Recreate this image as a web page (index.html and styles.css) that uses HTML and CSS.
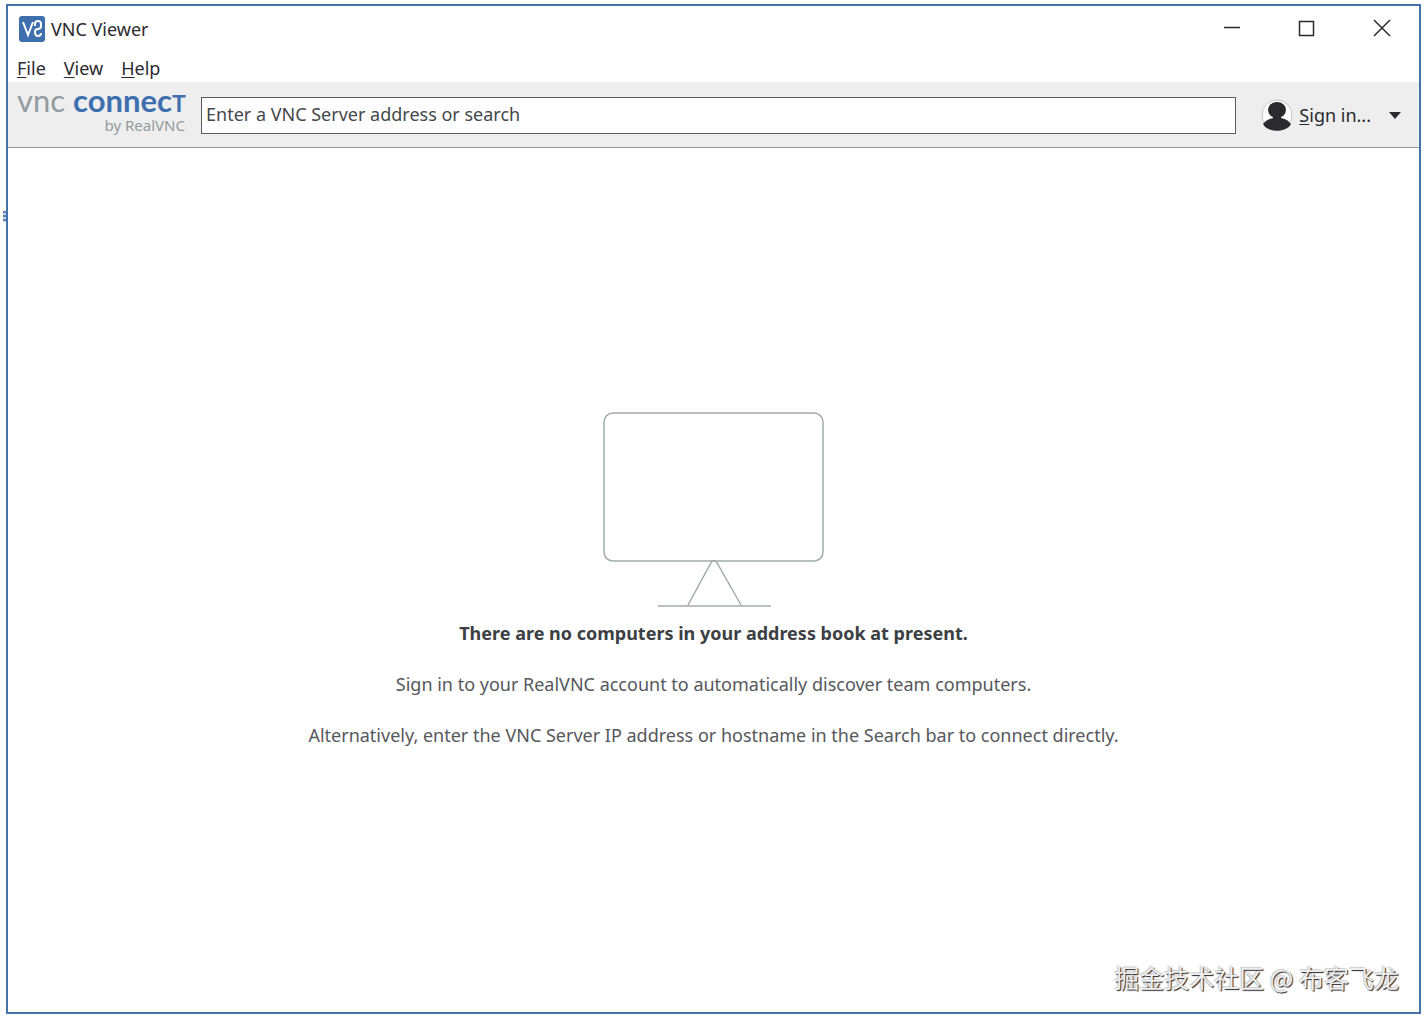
FILE: index.html
```html
<!DOCTYPE html>
<html lang="en">
<head>
    <meta charset="UTF-8">
    <meta name="viewport" content="width=device-width, initial-scale=1.0">
    <title>VNC Viewer</title>
    <link rel="stylesheet" href="styles.css">
</head>
<body>

    <div class="edge-mark"></div>

    <div class="window">
        <header class="titlebar">
            <svg class="app-icon" viewBox="0 0 26 26" aria-hidden="true">
                <rect width="26" height="26" rx="3"/>
                <path d="M4 6L9 19L14 6"/>
                <path d="M16 10V8Q16 5 19 5Q22 5 22 8V10Q22 13 19 13Q16 13 16 16Q16 20 19 20Q22 20 22 17"/>
            </svg>
            <h1>VNC Viewer</h1>
            <div class="window-buttons">
                <button aria-label="Minimize">
                    <svg viewBox="0 0 18 18"><path d="M1 8.5H17"/></svg>
                </button>
                <button aria-label="Maximize">
                    <svg viewBox="0 0 18 18"><rect x="1.5" y="2.5" width="14" height="14"/></svg>
                </button>
                <button aria-label="Close">
                    <svg viewBox="0 0 18 18"><path d="M1 1L17 17M17 1L1 17"/></svg>
                </button>
            </div>
        </header>

        <nav class="menubar">
            <button><u>F</u>ile</button>
            <button><u>V</u>iew</button>
            <button><u>H</u>elp</button>
        </nav>

        <div class="toolbar">
            <div class="brand">
                <div class="brand-name">vnc <b>connec<span>T</span></b></div>
                <div class="brand-by">by RealVNC</div>
            </div>
            <input class="search" type="text" aria-label="Address or search" placeholder="Enter a VNC Server address or search">
            <button class="sign-in">
                <svg class="avatar" viewBox="0 0 32 32" aria-hidden="true">
                    <circle cx="16" cy="16" r="15" fill="#fff" stroke="#c4c4c4"/>
                    <path d="M2 25C5 21 9 20 12 19C14 20 18 20 20 19C24 20 27 21 30 25C26 34 6 34 2 25Z"/>
                    <ellipse cx="16" cy="11" rx="9" ry="8"/>
                    <path d="M12 17H20V21H12Z"/>
                </svg>
                <span><u>S</u>ign in...</span>
                <svg class="caret" viewBox="0 0 12 7" aria-hidden="true"><path d="M0 0H12L6 7Z"/></svg>
            </button>
        </div>

        <main class="empty">
            <svg class="monitor" viewBox="0 0 222 196" aria-hidden="true">
                <rect x="1" y="2" width="219" height="148" rx="9"/>
                <path d="M85 194L109 150H113L138 194"/>
                <path d="M55 195H168"/>
            </svg>
            <h2>There are no computers in your address book at present.</h2>
            <p>Sign in to your RealVNC account to automatically discover team computers.</p>
            <p>Alternatively, enter the VNC Server IP address or hostname in the Search bar to connect directly.</p>
        </main>

        <footer class="watermark" lang="zh-CN">掘金技术社区 @ 布客飞龙</footer>
    </div>

</body>
</html>
```
FILE: styles.css
```css
* {
    box-sizing: border-box;
}

body {
    margin: 0;
    padding: 4px 4px 5px 6px;
    min-height: 100vh;
    display: flex;
    background: #fff;
    color: #2b2b2f;
    font-family: "Noto Sans", sans-serif;
    font-size: 18px;
    line-height: 25px;
}

button {
    padding: 0;
    border: none;
    background: none;
    color: inherit;
    font: inherit;
    cursor: pointer;
}

u {
    text-underline-offset: 2px;
}

.window {
    flex: 1;
    display: flex;
    flex-direction: column;
    border: 2px solid #4373a8;
}

/* Sliver of the page behind the window */
.edge-mark {
    position: absolute;
    left: 3px;
    top: 211px;
    width: 3px;
    height: 11px;
    background: repeating-linear-gradient(#5e83b3 0 2px, #c9d6e6 2px 4px);
}

/* Title bar */
.titlebar {
    display: flex;
    align-items: center;
    height: 46px;
    padding-left: 11px;
    gap: 6px;
}

.titlebar h1 {
    margin: 0;
    font-size: 18px;
    font-weight: normal;
}

.app-icon {
    width: 26px;
    height: 26px;
    fill: none;
    stroke: #fff;
    stroke-width: 2;
}

.app-icon rect {
    fill: #3f70ae;
    stroke: none;
}

.window-buttons {
    display: flex;
    align-self: flex-start;
    margin-left: auto;
}

.window-buttons button {
    display: flex;
    align-items: center;
    justify-content: center;
    width: 75px;
    height: 44px;
}

.window-buttons svg {
    width: 18px;
    height: 18px;
    fill: none;
    stroke: #2b2b2f;
    stroke-width: 1.5;
}

/* Menu */
.menubar {
    display: flex;
    align-items: flex-end;
    gap: 18px;
    height: 30px;
    padding: 0 0 1px 9px;
}

/* Toolbar */
.toolbar {
    display: flex;
    align-items: center;
    height: 66px;
    padding: 1px 18px 0 9px;
    background: #eee;
    border-bottom: 1px solid #8f9c9c;
}

.brand {
    width: 168px;
    height: 54px;
    margin-right: 16px;
    color: #929b9f;
    text-align: right;
    white-space: nowrap;
}

.brand-name {
    font-family: Lato, sans-serif;
    font-size: 31px;
    line-height: 24px;
}

.brand-name b {
    color: #3f70ae;
}

.brand-name span {
    font-size: 23px;
}

.brand-by {
    font-size: 15px;
    line-height: 20px;
}

.search {
    flex: 1;
    min-width: 0;
    height: 37px;
    padding: 0 4px 2px;
    border: 1px solid #5a5c60;
    border-radius: 0;
    background: #fff;
    color: #44474b;
    font: inherit;
}

.search::placeholder {
    color: #44474b;
    opacity: 1;
}

.sign-in {
    display: flex;
    align-items: center;
    margin-left: 25px;
}

.avatar {
    width: 32px;
    height: 32px;
    margin-right: 6px;
    fill: #2b2b2f;
}

.caret {
    width: 12px;
    height: 7px;
    margin-left: 18px;
    fill: #2b2b2f;
}

/* Empty address book */
.empty {
    flex: 1;
    display: flex;
    flex-direction: column;
    align-items: center;
    justify-content: center;
    padding-top: 51px;
    color: #55585c;
    text-align: center;
}

.empty h2 {
    margin: 14px 0 0;
    color: #3c3f43;
    font-size: 18px;
}

.empty p {
    margin: 26px 0 0;
}

.monitor {
    width: 222px;
    height: 196px;
    fill: none;
    stroke: #a3abab;
    stroke-width: 1.5;
}

.watermark {
    align-self: flex-end;
    padding: 0 20px 17px 0;
    color: #eee;
    font-family: "Noto Sans CJK SC", sans-serif;
    font-size: 25px;
    line-height: 36px;
    text-shadow: 1px 1px 1px #222, -1px -1px 1px #ccc;
}
```
